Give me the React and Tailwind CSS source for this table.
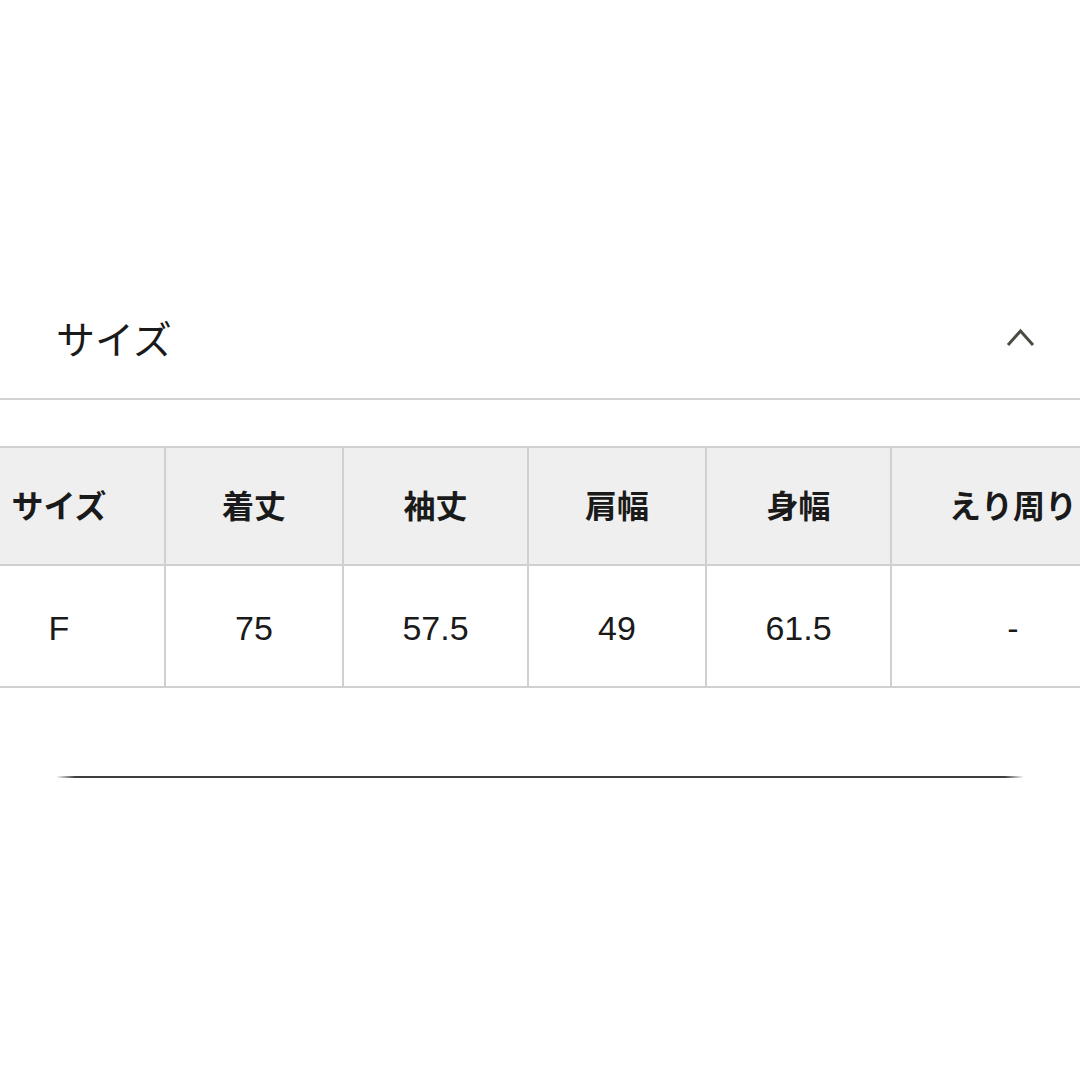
const COLS = [
  { label: 'サイズ', value: 'F', w: 'w-[212px]' },
  { label: '着丈', value: '75', w: 'w-[178px]' },
  { label: '袖丈', value: '57.5', w: 'w-[185px]' },
  { label: '肩幅', value: '49', w: 'w-[178px]' },
  { label: '身幅', value: '61.5', w: 'w-[185px]' },
  { label: 'えり周り', value: '-', w: 'w-[244px]' },
];

function ChevronUp() {
  return (
    <svg width="30" height="22" viewBox="0 0 30 22" fill="none">
      <polyline points="2,18 14.5,4 27,18" stroke="#4b4b43" strokeWidth="3" />
    </svg>
  );
}

export default function App() {
  return (
    <div
      className="w-[1080px] h-[1080px] bg-white overflow-hidden text-[#1a1a1a]"
      style={{ fontFamily: '"Liberation Sans", "Noto Sans CJK JP", sans-serif' }}
    >
      {/* Section header */}
      <div className="pt-[300px]">
        <div className="flex items-center justify-between h-[76px] pl-[56px] pr-[44px]">
          <span className="text-[39px] leading-none pt-[5px]">サイズ</span>
          <ChevronUp />
        </div>
      </div>
      <div className="mt-[22px] h-[2px] bg-[#d2d2d2]" />

      {/* Size table, scrolled slightly to the right */}
      <div className="mt-[46px] overflow-hidden">
        <div className="-ml-[46px] w-max border-t-2 border-[#d0d0d0]">
          <div className="flex h-[118px] bg-[#efefef] border-b-2 border-[#d0d0d0]">
            {COLS.map((c) => (
              <div
                key={c.label}
                className={`${c.w} shrink-0 flex items-center justify-center border-r-2 border-[#d0d0d0] text-[32px] font-bold whitespace-nowrap pt-[2px]`}
              >
                {c.label}
              </div>
            ))}
          </div>
          <div className="flex h-[122px] border-b-2 border-[#d0d0d0]">
            {COLS.map((c) => (
              <div
                key={c.label}
                className={`${c.w} shrink-0 flex items-center justify-center border-r-2 border-[#d0d0d0] text-[34px] pt-[4px]`}
              >
                {c.value}
              </div>
            ))}
          </div>
        </div>
      </div>

      {/* Bottom rule */}
      <div className="mt-[88px] mx-[56px] h-[2px] bg-[linear-gradient(to_right,transparent,#3f3f3f_2%,#3f3f3f_98%,transparent)]" />
    </div>
  );
}
